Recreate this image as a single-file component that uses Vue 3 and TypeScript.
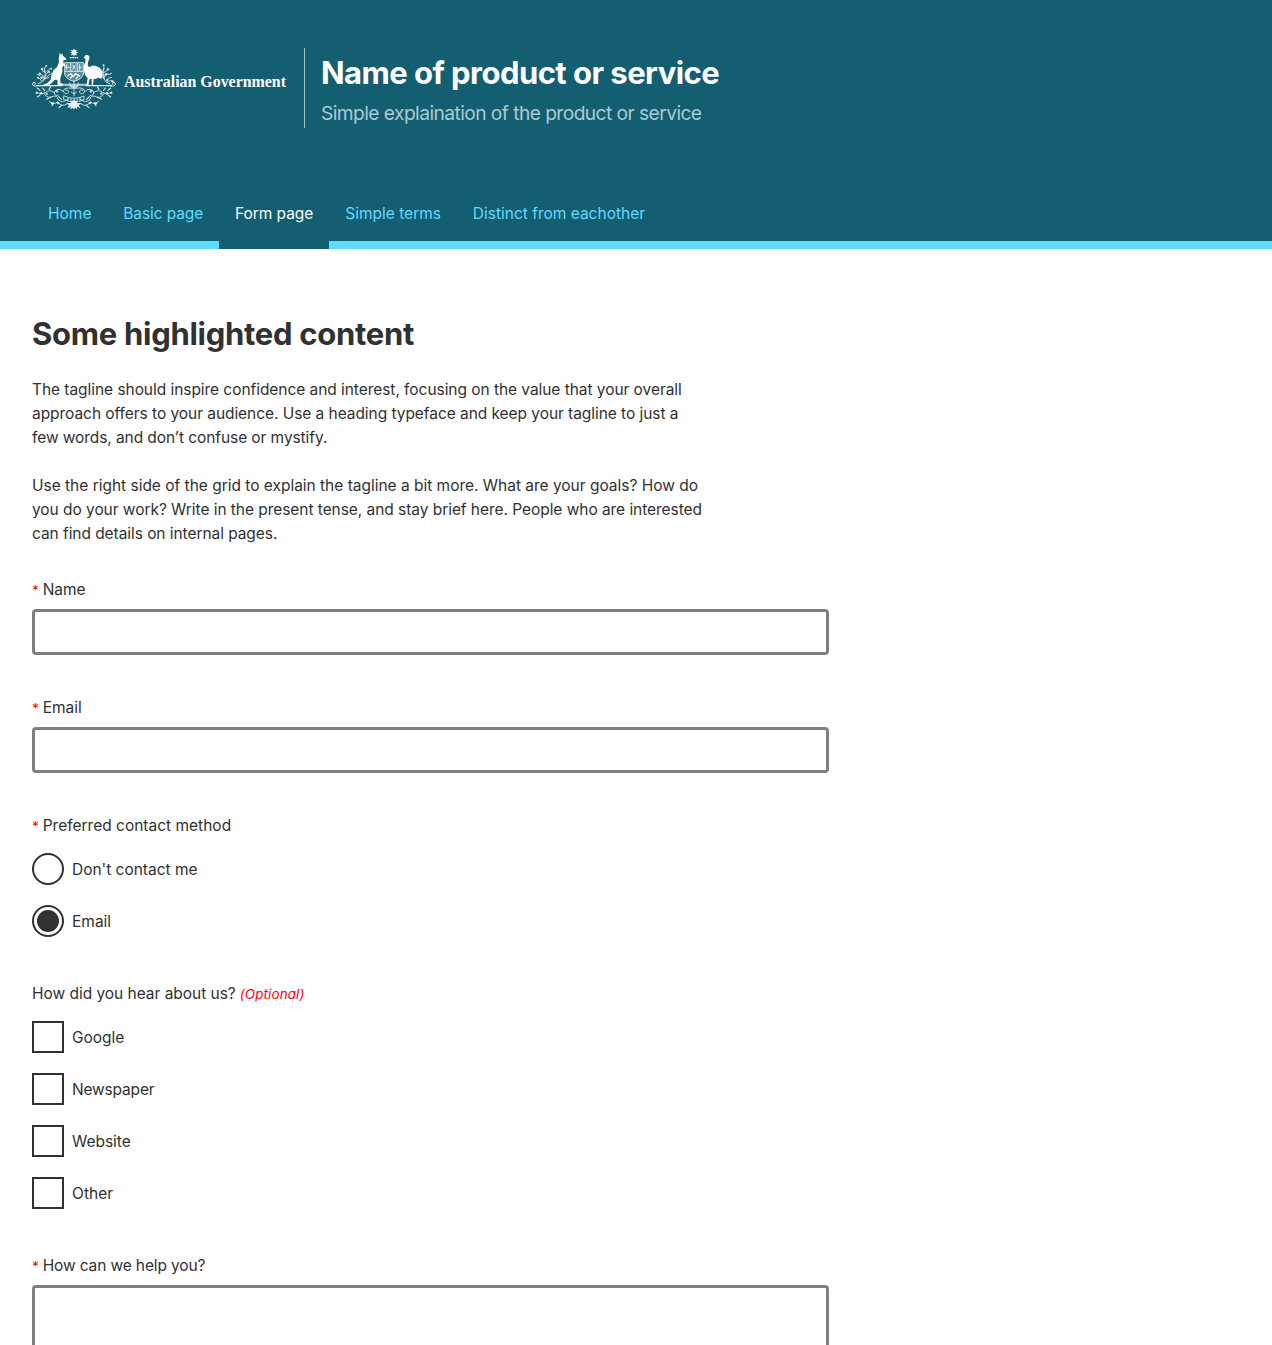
<script setup lang="ts">
import { ref } from 'vue'

interface NavItem {
  label: string
  width: number
  active?: boolean
}

interface Line {
  text: string
  tracking: number
}

const nav: NavItem[] = [
  { label: 'Home', width: 75.3 },
  { label: 'Basic page', width: 111.7 },
  { label: 'Form page', width: 110.3, active: true },
  { label: 'Simple terms', width: 127.5 },
  { label: 'Distinct from eachother', width: 205 },
]

const paragraphs: Line[][] = [
  [
    { text: 'The tagline should inspire confidence and interest, focusing on the value that your overall', tracking: -0.05 },
    { text: 'approach offers to your audience. Use a heading typeface and keep your tagline to just a', tracking: -0.055 },
    { text: 'few words, and don’t confuse or mystify.', tracking: -0.08 },
  ],
  [
    { text: 'Use the right side of the grid to explain the tagline a bit more. What are your goals? How do', tracking: -0.014 },
    { text: 'you do your work? Write in the present tense, and stay brief here. People who are interested', tracking: -0.05 },
    { text: 'can find details on internal pages.', tracking: -0.06 },
  ],
]

const contactOptions: Line[] = [
  { text: "Don't contact me", tracking: -0.02 },
  { text: 'Email', tracking: 0 },
]
const sources: Line[] = [
  { text: 'Google', tracking: -0.05 },
  { text: 'Newspaper', tracking: -0.18 },
  { text: 'Website', tracking: -0.03 },
  { text: 'Other', tracking: 0.06 },
]

const name = ref('')
const email = ref('')
const contact = ref('Email')
const heard = ref<string[]>([])
const message = ref('')
</script>

<template>
  <div class="page">
    <header class="header">
      <div class="brand">
        <div class="crest">
          <svg class="crest-art" viewBox="24 24 252 186" aria-hidden="true">
            <g fill="#fff">
              <path d="M150 25l2.6 6.2 6.4-2.6-2.6 6.3 6.2 2.6-6.2 2.6 2.6 6.3-6.4-2.6-2.6 6.2-2.6-6.2-6.4 2.6 2.6-6.3-6.2-2.6 6.2-2.6-2.6-6.3 6.4 2.6z" />
              <path d="M107 38l4 6 3-4 3 8 9 7 1 4-9 2 0 8 7 7-1 4-6-3-3 5 0 13-6 20 0 14 9 3 0 4-17-1-1-16-7 0-9 9-8 6-16 3-4-2 14-6 10-10 2-14 7-15 10-9 6-14-1-10z" />
              <path d="M179 53l5-7 7-1 5 4 0 8-4 9-1 10 4 6 9-5 11 0 11 6 8 12 2 16-4 5-9-3-8 4-6 0-2 17 8 3 0 2-12-1 0-21-6 0-4 17 5 3-1 2-10-1 4-23-8-11-4-15 1-13 4-11 1-8-5-3z" />
              <path d="M110 131h80l10 6-34 1-12 6h-8l-12-6-34-1z" opacity=".65" />
              <path d="M143 184l7-4 8 4 2 5 14 1-10 5 5 9-10-4 1 8-7-5-3 6-4-6-7 5 1-8-10 4 5-9-9-5 13-1z" opacity=".9" />
            </g>
            <path d="M137 53h26" stroke="#fff" stroke-width="3.5" stroke-dasharray="4 1.2" />
            <g fill="none" stroke="#fff" stroke-width="2.4">
              <path d="M122 68h56v34q-2 15-28 22q-26-7-28-22z" fill="#fff" fill-opacity=".3" />
              <path d="M123 94h54M140 69v25M160 69v25M128 73v17M124 82h13M145 74l10 15M155 74l-10 15M167 72v20M164 82h10" />
              <path d="M130 108l10-7 8 8 7-8 13 8M138 115l8-7M155 117l7-7" stroke-width="4" />
              <path d="M36 137h78M186 137h78" stroke-width="4" opacity=".85" />
              <path d="M42 137q-12 4-16-2q-2-10 7-8q5 5-2 7M258 137q12 4 16-2q2-10-7-8q-5 5 2 7" />
            </g>
            <g fill="none" stroke="#fff" stroke-width="2.6" opacity=".85" stroke-linecap="round">
              <path d="M42 132q14-3 19-17q6-14 0-31M48 101q10 2 13 15M72 95q-7 8-11 21M40 112q8-1 13 12M82 100q-10 6-20 17M53 86q0 9 9 11M75 112q-8 0-17 10M66 78q-7 6-5 19M39 103l9 4M80 85l-12 9" />
              <path d="M258 132q-14-3-19-17q-6-14 0-31M252 101q-10 2-13 15M234 95q7 8 7 21M262 112q-10-1-13 12M226 84q10 6 13 15M252 86q-2 9-11 11M268 123q-10-6-17 4M238 74q4 8 1 17M263 100l-10 4" />
              <path d="M144 145q-24-5-26 9q5 12 15 4q3-10-9-8M118 154q-20-14-27 3q0 12 11 9M92 158q-17-12-28 0q-14 8-27-1M156 145q24-5 26 9q-5 12-15 4q-3-10 9-8M182 154q20-14 27 3q0 12-11 9M208 158q17-12 28 0q14 8 27-1" />
              <path d="M60 161q12 18 27 8q14-4 15 10q13 12 31-2M240 161q-12 18-27 8q-14-4-15 10q-13 12-31-2M76 184q13 13 25 1q10 18 28 7M224 184q-13 13-25 1q-10 18-28 7" />
              <path d="M48 151l-8-7M47 166l-7 5M62 152l-6-8M75 148l5-8M80 171l-12 7M89 188l-5 9M112 178l-8-8M113 196l-8 7M252 151l8-7M253 166l7 5M238 152l6-8M225 148l-5-8M220 171l12 7M211 188l5 9M188 178l8-8M187 196l8 7" stroke-width="3.4" />
              <path d="M150 123v45M137 128q0 15 13 18q13-3 13-18M142 156l8 6 8-6M120 168q30 14 60 0v11q-30 13-60 0z" />
              <path d="M132 174v7M141 176v7M150 177v7M159 176v7M168 174v7" />
            </g>
            <g fill="#fff" opacity=".75">
              <circle cx="47" cy="101" r="3.5" /><circle cx="54" cy="87" r="3.5" /><circle cx="67" cy="77" r="3" /><circle cx="75" cy="96" r="3.5" />
              <circle cx="42" cy="114" r="3" /><circle cx="53" cy="113" r="4" /><circle cx="82" cy="86" r="3" /><circle cx="239" cy="76" r="3" />
              <circle cx="252" cy="88" r="3.5" /><circle cx="246" cy="103" r="4" /><circle cx="265" cy="124" r="3.5" /><circle cx="250" cy="120" r="3.5" />
              <circle cx="38" cy="159" r="3.5" /><circle cx="51" cy="160" r="4" /><circle cx="68" cy="161" r="3.5" /><circle cx="99" cy="154" r="4" />
              <circle cx="262" cy="159" r="3.5" /><circle cx="249" cy="160" r="4" /><circle cx="232" cy="161" r="3.5" /><circle cx="201" cy="154" r="4" />
              <circle cx="84" cy="190" r="3.5" /><circle cx="102" cy="189" r="4" /><circle cx="216" cy="190" r="3.5" /><circle cx="198" cy="189" r="4" />
            </g>
          </svg>
          <span class="crest-name">Australian Government</span>
        </div>
        <div class="titles">
          <h1 class="product">Name of product or service</h1>
          <p class="tagline">Simple explaination of the product or service</p>
        </div>
      </div>
      <nav class="nav">
        <a
          v-for="item in nav"
          :key="item.label"
          class="nav-item"
          :class="{ active: item.active }"
          :style="{ width: item.width + 'px' }"
        >{{ item.label }}</a>
      </nav>
    </header>

    <main class="content">
      <h2 class="heading">Some highlighted content</h2>
      <p v-for="(lines, i) in paragraphs" :key="i" class="copy">
        <span v-for="line in lines" :key="line.text" class="line" :style="{ letterSpacing: line.tracking + 'px' }">{{ line.text }}</span>
      </p>

      <form class="form" @submit.prevent>
        <div class="field">
          <label class="label" for="name"><span class="star">*</span>Name</label>
          <input id="name" v-model="name" class="input" type="text" />
        </div>
        <div class="field">
          <label class="label" for="email"><span class="star">*</span>Email</label>
          <input id="email" v-model="email" class="input" type="email" />
        </div>
        <div class="field group">
          <div class="label method"><span class="star">*</span>Preferred contact method</div>
          <label v-for="option in contactOptions" :key="option.text" class="option">
            <input v-model="contact" class="control radio" type="radio" name="contact" :value="option.text" />
            <span class="option-text" :style="{ letterSpacing: option.tracking + 'px' }">{{ option.text }}</span>
          </label>
        </div>
        <div class="field group">
          <div class="label">How did you hear about us?<em class="optional">(Optional)</em></div>
          <label v-for="source in sources" :key="source.text" class="option">
            <input v-model="heard" class="control" type="checkbox" :value="source.text" />
            <span class="option-text" :style="{ letterSpacing: source.tracking + 'px' }">{{ source.text }}</span>
          </label>
        </div>
        <div class="field">
          <label class="label help" for="message"><span class="star">*</span>How can we help you?</label>
          <textarea id="message" v-model="message" class="input area"></textarea>
        </div>
      </form>
    </main>
  </div>
</template>

<style>
body {
  background: #fff;
}
</style>

<style scoped>
.page {
  height: 1345px;
  overflow: hidden;
  color: #313131;
  font: 400 15.5px/24px Inter, "Liberation Sans", sans-serif;
  letter-spacing: -0.03px;
}
.page * {
  box-sizing: border-box;
}
h1,
h2,
p {
  margin: 0;
}
.header {
  height: 249px;
  padding-top: 48px;
  background: #135e70;
  display: flex;
  flex-direction: column;
  justify-content: space-between;
}
.brand {
  display: flex;
  height: 80px;
  padding-left: 32px;
}
.crest {
  display: flex;
  width: 272px;
  color: #fff;
}
.crest-art {
  width: 84px;
  height: 62px;
  flex: none;
}
.crest-name {
  height: 24px;
  margin: 21px 0 0 8px;
  font: 700 17.6px/24px "Liberation Serif", serif;
  letter-spacing: 0;
  white-space: nowrap;
  transform: scaleX(0.903);
  transform-origin: left center;
}
.titles {
  padding-left: 16px;
  border-left: 1px solid #a1bfc6;
  white-space: nowrap;
}
.product {
  margin-top: 5px;
  color: #fff;
  font-size: 31px;
  line-height: 40px;
  letter-spacing: -0.54px;
}
.tagline {
  margin-top: 6px;
  color: #a9cbd3;
  font-size: 19.2px;
  line-height: 28px;
  letter-spacing: -0.56px;
}
.nav {
  display: flex;
  padding-left: 32px;
  border-bottom: 8px solid #61daff;
}
.nav-item {
  height: 64px;
  margin-bottom: -8px;
  padding: 17px 0 0 16px;
  color: #61daff;
  letter-spacing: 0;
  white-space: nowrap;
}
.nav-item:nth-child(2) {
  letter-spacing: -0.1px;
}
.nav-item.active {
  color: #fff;
  background: #135e70;
  letter-spacing: -0.05px;
}
.content {
  padding: 64px 32px 0;
}
.heading {
  margin-bottom: 24px;
  font-size: 31px;
  line-height: 41px;
  letter-spacing: -0.28px;
}
.copy {
  margin-bottom: 24px;
}
.line {
  display: block;
  white-space: nowrap;
}
.form {
  display: flex;
  flex-direction: column;
  gap: 40px;
  width: 797px;
  padding-top: 7px;
}
.label {
  display: block;
  margin-bottom: 6px;
  line-height: 26px;
}
.method {
  letter-spacing: 0;
}
.help {
  letter-spacing: -0.13px;
}
.star {
  display: inline-block;
  width: 10.7px;
  color: #f00;
  font-size: 13.5px;
  line-height: 20px;
}
.optional {
  margin-left: 4px;
  color: #f00;
  font-size: 13.4px;
  line-height: 20px;
  letter-spacing: 0.15px;
}
.input {
  display: block;
  width: 100%;
  height: 46px;
  margin: 0;
  padding: 8px;
  border: 3px solid #808080;
  border-radius: 4px;
  background: #fff;
  font: inherit;
  color: inherit;
  outline: none;
}
.area {
  height: 160px;
  resize: none;
}
.group {
  margin-bottom: 4px;
}
.group .label {
  margin-bottom: 14px;
}
.option {
  display: flex;
  align-items: center;
  gap: 8px;
  height: 32px;
}
.option + .option {
  margin-top: 20px;
}
.option-text {
  padding-top: 2px;
}
.control {
  appearance: none;
  width: 32px;
  height: 32px;
  margin: 0;
  border: 2px solid #313131;
  background: #fff;
}
.radio {
  padding: 3px;
  border-radius: 50%;
}
.radio:checked::before {
  content: "";
  display: block;
  width: 22px;
  height: 22px;
  border-radius: 50%;
  background: #313131;
}
</style>
